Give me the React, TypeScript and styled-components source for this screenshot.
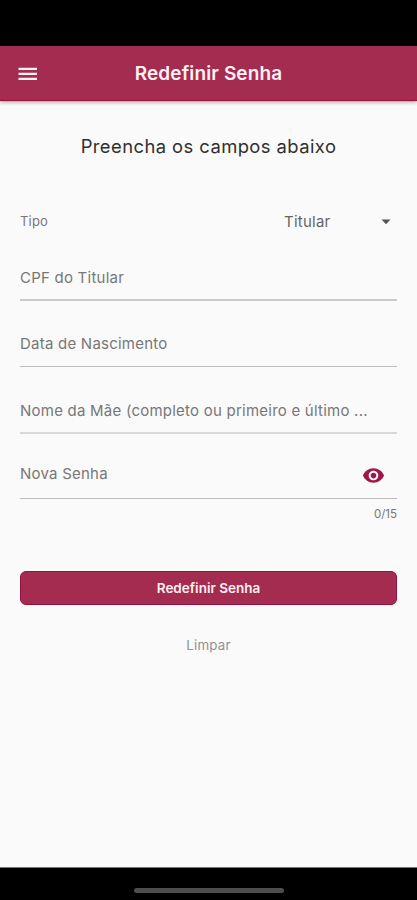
import React from "react";
import styled, { createGlobalStyle } from "styled-components";

const GlobalStyle = createGlobalStyle`
  * { box-sizing: border-box; }
  body {
    margin: 0;
    background: #fafafa;
    font-family: Inter, "Liberation Sans", sans-serif;
  }
`;

const Screen = styled.div`
  display: flex;
  flex-direction: column;
  width: 417px;
  height: 900px;
  background: #fafafa;
  overflow: hidden;
`;

const StatusBar = styled.div`
  height: 46px;
  flex: none;
  background: #000;
`;

const AppBar = styled.header`
  display: grid;
  grid-template-columns: 56px 1fr 56px;
  align-items: center;
  flex: none;
  height: 55px;
  padding-top: 2px;
  background: #a32c50;
  border-bottom: 1px solid #990f3d;
  box-shadow: 0 1px 4px rgba(0, 0, 0, 0.4);
`;

const MenuButton = styled.button`
  display: flex;
  padding: 0 0 0 16px;
  border: 0;
  background: none;
  color: #fff0f3;
`;

const Title = styled.h1`
  margin: 0;
  text-align: center;
  font-size: 19px;
  line-height: 24px;
  font-weight: 600;
  letter-spacing: 0.13px;
  color: #fff0f3;
  white-space: nowrap;
`;

const Form = styled.main`
  display: flex;
  flex-direction: column;
  flex: 1;
  padding: 33px 20px 0;
`;

const Heading = styled.h2`
  margin: 0;
  text-align: center;
  font-size: 18.4px;
  line-height: 24px;
  font-weight: 400;
  letter-spacing: 0.43px;
  color: #303030;
`;

const TypeRow = styled.div`
  display: flex;
  align-items: center;
  justify-content: space-between;
  height: 40px;
  margin-top: 44px;
`;

const Text = styled.span<{ $size?: number; $spacing?: number; $color?: string }>`
  font-family: Inter, "Liberation Sans", sans-serif;
  font-size: ${(p) => p.$size ?? 15}px;
  line-height: 20px;
  letter-spacing: ${(p) => p.$spacing ?? 0.23}px;
  color: ${(p) => p.$color ?? "#777"};
  white-space: nowrap;
`;

const TypeLabel = styled(Text)`
  margin-bottom: 2px;
`;

const Select = styled.div`
  display: flex;
  align-items: center;
  justify-content: space-between;
  width: 113px;
  padding-right: 6px;
`;

const Field = styled.div<{ $height: number; $line?: string; $thick?: boolean }>`
  display: flex;
  align-items: flex-end;
  justify-content: space-between;
  height: ${(p) => p.$height}px;
  padding-bottom: ${(p) => (p.$thick ? 11 : 12)}px;
  border-bottom: ${(p) => (p.$thick ? 2 : 1)}px solid ${(p) => p.$line ?? "#bdbdbd"};
`;

const PasswordField = styled(Field)`
  padding-bottom: 11px;
`;

const PasswordLabel = styled(Text)`
  margin-bottom: 3px;
`;

const EyeButton = styled.button`
  display: flex;
  padding: 0;
  margin-right: 12px;
  border: 0;
  background: none;
  color: #9f174a;
`;

const Counter = styled.div`
  display: flex;
  justify-content: flex-end;
  margin-top: 5px;
  height: 20px;
`;

const SubmitButton = styled.button`
  height: 34px;
  margin-top: 47px;
  padding: 0;
  border: 1px solid #990f3d;
  border-radius: 6px;
  background: #a32c50;
  color: #fff0f3;
  font: 600 13.5px/20px Inter, "Liberation Sans", sans-serif;
`;

const ClearButton = styled.button`
  align-self: center;
  margin-top: 30px;
  padding: 0;
  border: 0;
  background: none;
`;

const HomeBar = styled.footer`
  display: flex;
  justify-content: center;
  flex: none;
  height: 33px;
  padding-top: 20px;
  background: #000;
  border-top: 1px solid #777;
`;

const HomeIndicator = styled.div`
  width: 150px;
  height: 5px;
  border-radius: 3px;
  background: #4d4d4d;
`;

const MenuIcon = () => (
  <svg width="24" height="24" viewBox="0 0 24 24" fill="currentColor">
    <path d="M2.5 5.8h18.5v2.2H2.5zM2.5 10.8h18.5v2.2H2.5zM2.5 15.8h18.5v2.2H2.5z" />
  </svg>
);

const CaretIcon = () => (
  <svg width="10" height="6" viewBox="0 0 10 6" fill="#555">
    <path d="M0.5 0.5h9L5 5.3z" />
  </svg>
);

const EyeIcon = () => (
  <svg width="23" height="23" viewBox="0 0 24 24" fill="currentColor">
    <path d="M12 4.5C7 4.5 2.73 7.61 1 12c1.73 4.39 6 7.5 11 7.5s9.27-3.11 11-7.5c-1.73-4.39-6-7.5-11-7.5zM12 17c-2.76 0-5-2.24-5-5s2.24-5 5-5 5 2.24 5 5-2.24 5-5 5zm0-8c-1.66 0-3 1.34-3 3s1.34 3 3 3 3-1.34 3-3-1.34-3-3-3z" />
  </svg>
);

export default function App() {
  return (
    <Screen>
      <GlobalStyle />
      <StatusBar />
      <AppBar>
        <MenuButton aria-label="Menu">
          <MenuIcon />
        </MenuButton>
        <Title>Redefinir Senha</Title>
      </AppBar>
      <Form>
        <Heading>Preencha os campos abaixo</Heading>
        <TypeRow>
          <TypeLabel $size={13} $spacing={0.2}>Tipo</TypeLabel>
          <Select>
            <Text $color="#666">Titular</Text>
            <CaretIcon />
          </Select>
        </TypeRow>
        <Field $height={59} $line="#c9c9c9" $thick>
          <Text>CPF do Titular</Text>
        </Field>
        <Field $height={66}>
          <Text>Data de Nascimento</Text>
        </Field>
        <Field $height={67} $line="#d8d8d8" $thick>
          <Text>Nome da Mãe (completo ou primeiro e último ...</Text>
        </Field>
        <PasswordField $height={65}>
          <PasswordLabel>Nova Senha</PasswordLabel>
          <EyeButton aria-label="Mostrar senha">
            <EyeIcon />
          </EyeButton>
        </PasswordField>
        <Counter>
          <Text $size={11.5} $spacing={0}>0/15</Text>
        </Counter>
        <SubmitButton>Redefinir Senha</SubmitButton>
        <ClearButton>
          <Text $size={13.3} $spacing={0.25} $color="#929292">Limpar</Text>
        </ClearButton>
      </Form>
      <HomeBar>
        <HomeIndicator />
      </HomeBar>
    </Screen>
  );
}
